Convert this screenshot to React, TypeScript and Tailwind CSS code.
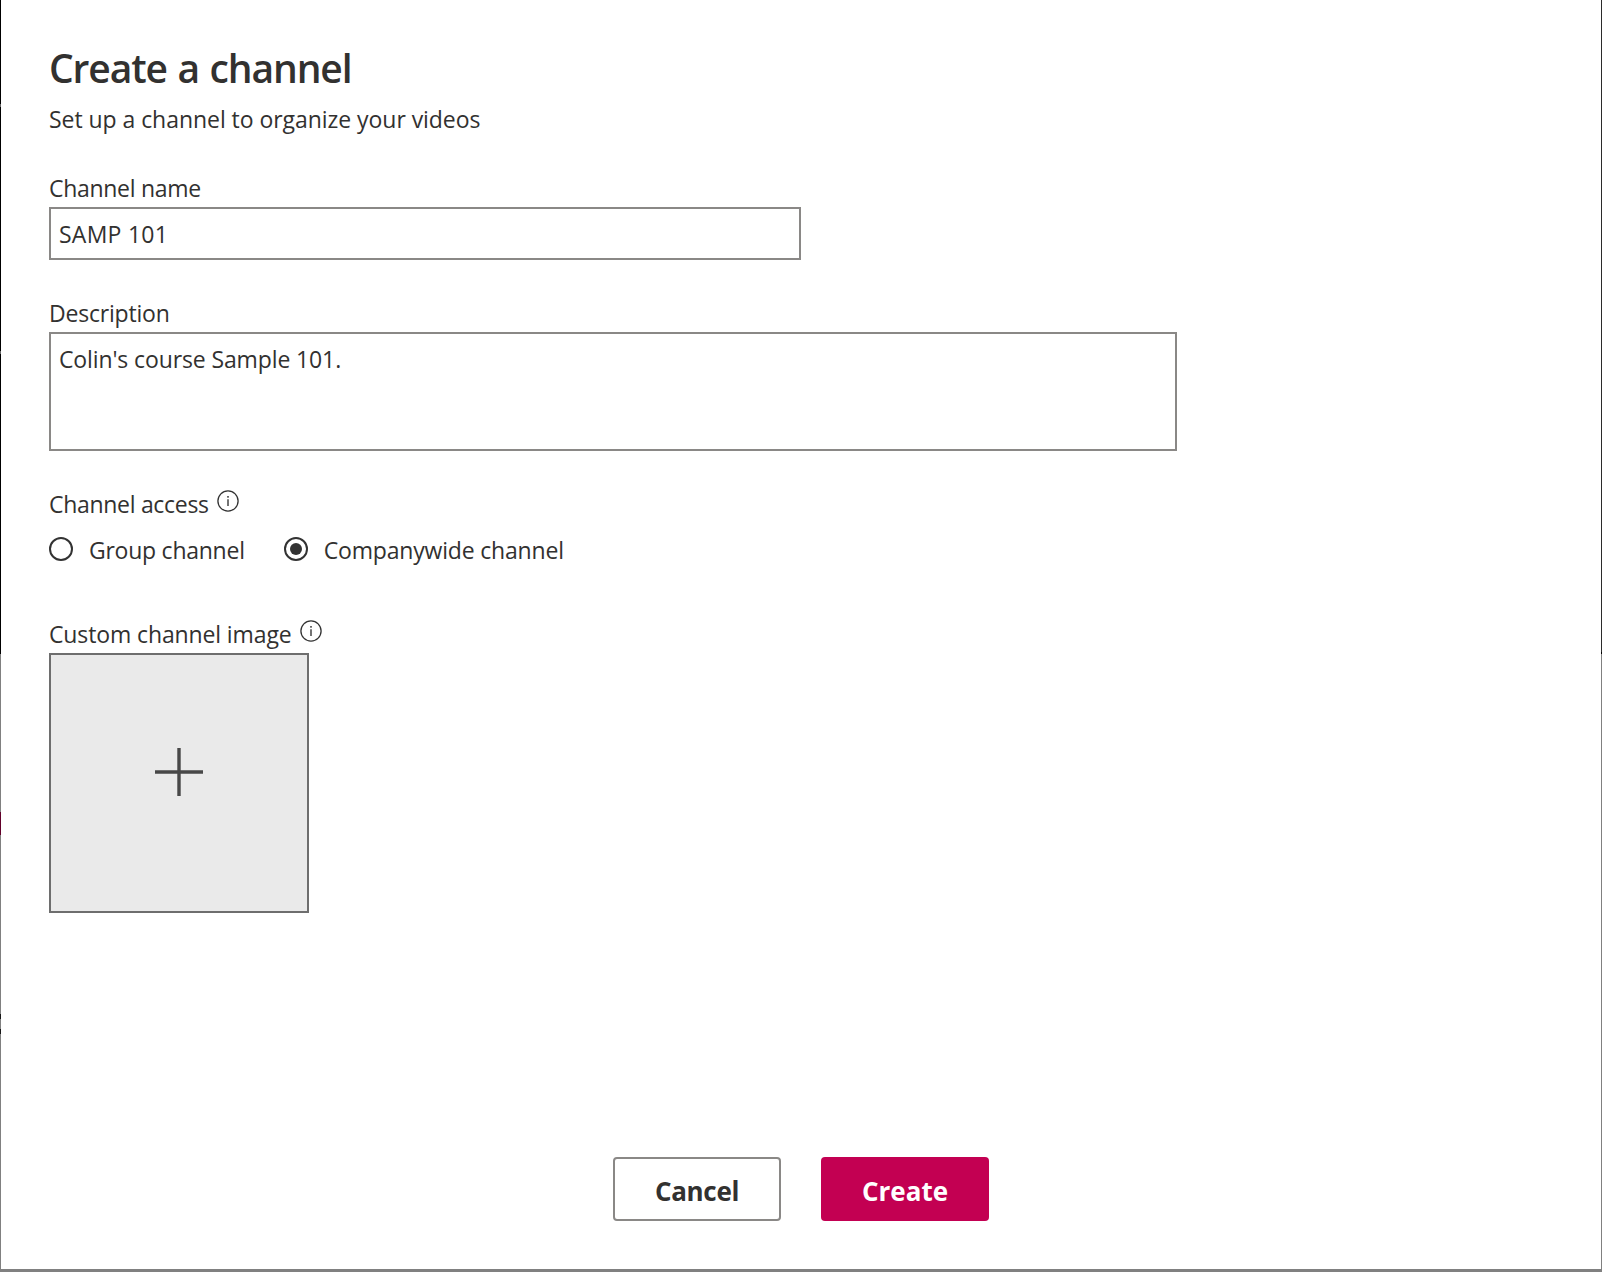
import React, { useState } from "react";

function InfoIcon() {
  return (
    <svg width="22" height="22" viewBox="0 0 22 22" fill="none" className="shrink-0">
      <circle cx="11" cy="11" r="10.1" stroke="#333" strokeWidth="1.3" />
      <path d="M11 9.2V16" stroke="#444" strokeWidth="1.5" />
      <rect x="10.2" y="6" width="1.6" height="1.7" fill="#444" />
    </svg>
  );
}

function Radio({ label, tracking, checked, onSelect }: { label: string; tracking: string; checked: boolean; onSelect: () => void }) {
  return (
    <button type="button" role="radio" aria-checked={checked} onClick={onSelect} className="flex items-start gap-4">
      <svg width="24" height="24" viewBox="0 0 24 24" fill="none" className="mt-[3px] shrink-0">
        <circle cx="12" cy="12" r="11" stroke="#333" strokeWidth="2" />
        {checked && <circle cx="12" cy="12" r="6" fill="#333" />}
      </svg>
      <span className={tracking}>{label}</span>
    </button>
  );
}

export default function App() {
  const [access, setAccess] = useState("company");
  return (
    <div className="flex h-[1272px] w-[1602px] bg-[#808080] font-['Open_Sans',sans-serif] text-[23px] leading-8 text-[#323130]">
      {/* Page behind the dialog, left edge */}
      <div className="flex w-px shrink-0 flex-col">
        <div className="h-[104px] bg-black" />
        <div className="h-[3px] bg-[#666]" />
        <div className="h-[244px] bg-black" />
        <div className="h-[3px] bg-[#666]" />
        <div className="h-[300px] bg-black" />
        <div className="h-[158px] bg-[#808080]" />
        <div className="h-[23px] bg-[#62002a]" />
        <div className="h-[179px] bg-[#808080]" />
        <div className="h-[5px] bg-[#161616]" />
        <div className="h-[10px] bg-[#808080]" />
        <div className="h-[5px] bg-[#161616]" />
      </div>
      <main className="flex h-[1269px] w-[1600px] shrink-0 flex-col bg-white px-12 pt-[44px]">
        <h1 className="h-12 text-[39px] leading-[48px] font-semibold tracking-[-1.1px] [word-spacing:1.5px]">Create a channel</h1>
        <p className="mt-[11px] tracking-[-0.05px]">Set up a channel to organize your videos</p>

        <label htmlFor="name" className="mt-[37px] tracking-[-0.3px]">Channel name</label>
        <input
          id="name"
          defaultValue="SAMP 101"
          className="mt-[3px] h-[53px] w-[752px] border-2 border-[#8a8886] px-2 tracking-[0.25px] outline-none"
        />

        <label htmlFor="description" className="mt-[37px] tracking-[-0.2px]">Description</label>
        <textarea
          id="description"
          defaultValue="Colin's course Sample 101."
          className="mt-[3px] h-[119px] w-[1128px] resize-none border-2 border-[#8a8886] px-2 pt-[9px] tracking-[-0.12px] outline-none"
        />

        <div className="mt-[37px] flex items-start gap-2">
          <span className="tracking-[-0.3px]">Channel access</span>
          <span className="mt-[2px]"><InfoIcon /></span>
        </div>
        <div role="radiogroup" className="mt-[14px] flex h-8 gap-[39px]">
          <Radio label="Group channel" tracking="tracking-[-0.25px]" checked={access === "group"} onSelect={() => setAccess("group")} />
          <Radio label="Companywide channel" tracking="tracking-[-0.18px]" checked={access === "company"} onSelect={() => setAccess("company")} />
        </div>

        <div className="mt-[52px] flex items-start gap-2">
          <span className="tracking-[-0.12px]">Custom channel image</span>
          <span className="mt-[2px]"><InfoIcon /></span>
        </div>
        <button type="button" aria-label="Add image" className="mt-[3px] flex size-[260px] items-center justify-center border-2 border-[#6e6e6e] bg-[#eaeaea] pb-[22px]">
          <svg width="48" height="48" viewBox="0 0 48 48" stroke="#484848" strokeWidth="3.4">
            <path d="M24 0V48M0 24H48" />
          </svg>
        </button>

        <div className="mt-[244px] flex justify-center gap-10 text-[26px] font-bold">
          <button type="button" className="h-16 w-[168px] rounded-[4px] border-2 border-[#8a8886] bg-white pt-[3px] tracking-[-0.3px]">Cancel</button>
          <button type="button" className="h-16 w-[168px] rounded-[4px] bg-[#c30052] pt-[3px] text-white">Create</button>
        </div>
      </main>
      {/* Page behind the dialog, right edge */}
      <div className="flex w-px shrink-0 flex-col">
        <div className="h-[652px] bg-[#2b2b2b]" />
        <div className="h-[2px] bg-black" />
      </div>
    </div>
  );
}
